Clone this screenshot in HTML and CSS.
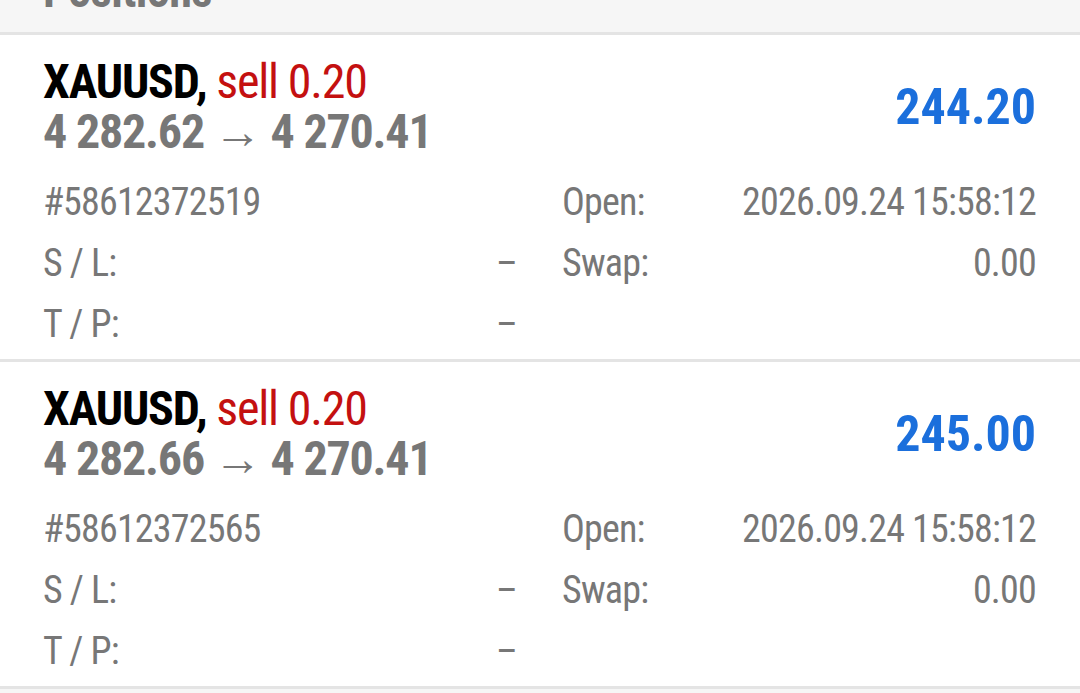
FILE: index.html
```html
<!DOCTYPE html>
<html lang="en">
<head>
	<meta charset="UTF-8">
	<title>Positions</title>
	<link rel="stylesheet" href="styles.css">
</head>
<body>
	<div class="section-head">
		<span class="section-title">Positions</span>
	</div>

	<div class="position">
		<div class="pos-top">
			<div class="pos-main">
				<div class="pos-symbol">XAUUSD, <span class="pos-type">sell 0.20</span></div>
				<div class="pos-prices">4 282.62 → 4 270.41</div>
			</div>
			<div class="pos-profit">244.20</div>
		</div>
		<div class="pos-details">
			<div class="pos-cell"><span>#58612372519</span><span></span></div>
			<div class="pos-cell"><span>Open:</span><span>2026.09.24 15:58:12</span></div>
			<div class="pos-cell"><span>S / L:</span><span>–</span></div>
			<div class="pos-cell"><span>Swap:</span><span>0.00</span></div>
			<div class="pos-cell"><span>T / P:</span><span>–</span></div>
			<div class="pos-cell"></div>
		</div>
	</div>

	<div class="position">
		<div class="pos-top">
			<div class="pos-main">
				<div class="pos-symbol">XAUUSD, <span class="pos-type">sell 0.20</span></div>
				<div class="pos-prices">4 282.66 → 4 270.41</div>
			</div>
			<div class="pos-profit">245.00</div>
		</div>
		<div class="pos-details">
			<div class="pos-cell"><span>#58612372565</span><span></span></div>
			<div class="pos-cell"><span>Open:</span><span>2026.09.24 15:58:12</span></div>
			<div class="pos-cell"><span>S / L:</span><span>–</span></div>
			<div class="pos-cell"><span>Swap:</span><span>0.00</span></div>
			<div class="pos-cell"><span>T / P:</span><span>–</span></div>
			<div class="pos-cell"></div>
		</div>
	</div>
</body>
</html>
```

FILE: styles.css
```css
* {
    margin: 0;
    padding: 0;
    box-sizing: border-box;
}
body {
    background-color: #f6f6f6;
    font-family: "Roboto Condensed", "Liberation Sans Narrow", "Roboto", sans-serif;
    color: #777;
}
.section-head {
    height: 32px;
    padding-left: 43px;
    overflow: hidden;
    border-bottom: 3px solid #e4e4e4;
    box-sizing: content-box;
}
.section-title {
    display: block;
    margin-top: -31px;
    font-size: 46px;
    line-height: 44px;
    font-weight: bold;
    letter-spacing: -0.5px;
    color: #777;
}
.position {
    background-color: #fff;
    padding: 22px 44px 4px 43px;
    border-bottom: 3px solid #e4e4e4;
}
.pos-top {
    display: flex;
    justify-content: space-between;
    align-items: center;
}
.pos-symbol,
.pos-prices {
    font-size: 48px;
    line-height: 50px;
    font-weight: bold;
    letter-spacing: -1.2px;
}
.pos-symbol {
    color: #000;
}
.pos-type {
    font-weight: normal;
    color: #c41010;
}
.pos-profit {
    font-size: 50px;
    line-height: 50px;
    font-weight: bold;
    color: #1b6fdc;
}
.pos-details {
    display: grid;
    grid-template-columns: 1fr 1fr;
    column-gap: 45px;
    margin-top: 15px;
    font-size: 38px;
    line-height: 61px;
    letter-spacing: -0.8px;
}
.pos-cell {
    display: flex;
    justify-content: space-between;
}
```
